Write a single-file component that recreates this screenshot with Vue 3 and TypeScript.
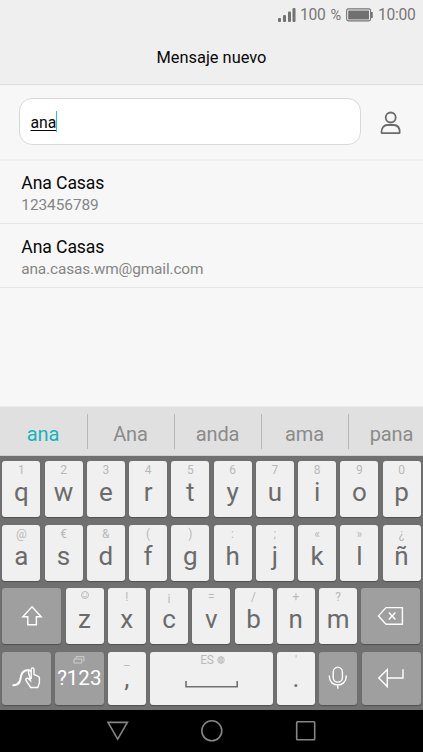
<script setup lang="ts">
interface Contact {
  name: string
  detail: string
}

interface Key {
  label: string
  hint: string
}

const contacts: Contact[] = [
  { name: 'Ana Casas', detail: '123456789' },
  { name: 'Ana Casas', detail: 'ana.casas.wm@gmail.com' },
]

const suggestions: string[] = ['ana', 'Ana', 'anda', 'ama', 'pana']

function makeRow(labels: string, hints: string): Key[] {
  const marks = [...hints]
  return [...labels].map((label, i) => ({ label, hint: marks[i] }))
}

const firstRow = makeRow('qwertyuiop', '1234567890')
const secondRow = makeRow('asdfghjklñ', '@€&():;«»¿')
const thirdRow = makeRow('zxcvbnm', '☺!¡=/+?')
</script>

<template>
  <div class="screen">
    <div class="status">
      <svg class="signal" width="18" height="15" viewBox="0 0 18 15">
        <rect x="0" y="11" width="3" height="4" rx="1" />
        <rect x="5" y="8" width="3" height="7" rx="1" />
        <rect x="10" y="4.5" width="3" height="10.5" rx="1" />
        <rect x="14.5" y="1" width="3" height="14" rx="1" />
      </svg>
      <span class="charge">100</span>
      <span class="percent">%</span>
      <svg class="battery" width="27" height="14" viewBox="0 0 27 14">
        <rect x="0.6" y="0.9" width="24" height="12" rx="1.8" class="shell" />
        <rect x="2.2" y="2.4" width="20.8" height="9" rx="0.5" class="fill" />
        <rect x="25" y="4" width="1.7" height="6" class="fill" />
      </svg>
      <span class="clock">10:00</span>
    </div>

    <header class="title"><span>Mensaje nuevo</span></header>

    <div class="recipient">
      <div class="field"><span class="typed">ana</span><i class="caret"></i></div>
      <svg class="person" width="22" height="24" viewBox="0 0 22 24">
        <circle cx="10.7" cy="6.5" r="5" />
        <path d="M2.2 22.2Q1.5 22.2 1.5 21.4C1.5 16.8 3.8 14 7.5 14H13.7C17.4 14 19.7 16.8 19.7 21.4Q19.7 22.2 19 22.2Z" />
      </svg>
    </div>

    <ul class="contacts">
      <li v-for="contact in contacts" :key="contact.detail">
        <span class="name">{{ contact.name }}</span>
        <span class="detail">{{ contact.detail }}</span>
      </li>
    </ul>

    <div class="suggestions">
      <span v-for="(word, i) in suggestions" :key="word" :class="{ active: i === 0 }">{{ word }}</span>
    </div>

    <div class="keyboard">
      <div class="row">
        <div v-for="key in firstRow" :key="key.label" class="key">
          <span class="hint">{{ key.hint }}</span>
          <span class="label">{{ key.label }}</span>
        </div>
      </div>
      <div class="row">
        <div v-for="key in secondRow" :key="key.label" class="key">
          <span class="hint">{{ key.hint }}</span>
          <span class="label">{{ key.label }}</span>
        </div>
      </div>
      <div class="row">
        <div class="key dark wide">
          <svg width="22" height="22" viewBox="0 0 22 22">
            <path d="M11 1.8L20.2 11.8H15.4V19.7H6.8V11.8H1.8Z" />
          </svg>
        </div>
        <div v-for="key in thirdRow" :key="key.label" class="key">
          <svg v-if="key.hint === '☺'" class="smiley" width="38" height="14" viewBox="0 0 38 14">
            <circle cx="19" cy="5" r="3.5" />
            <path d="M17 5.8Q19 8.6 21 5.8M17.5 3.5V4.3M20.5 3.5V4.3" />
          </svg>
          <span v-else class="hint">{{ key.hint }}</span>
          <span class="label">{{ key.label }}</span>
        </div>
        <div class="key dark wide">
          <svg width="28" height="20" viewBox="0 0 28 20">
            <path d="M9 1.6H25.4V18.2H9L1.5 9.9Z" />
            <path d="M11.8 6.4L18.4 13.4M18.4 6.4L11.8 13.4" />
          </svg>
        </div>
      </div>
      <div class="row last">
        <div class="key dark medium">
          <svg class="swipe" width="30" height="24" viewBox="0 0 30 24">
            <path class="stroke-trail" d="M1.5 19.3C6 19.3 8.5 18 9.3 13.5C10 8.5 11 4 18.5 4" />
            <path d="M20.2 13V3.5C20.2 1.3 23 1.3 23 3.5V8.5L27.3 10.3Q28.4 10.8 28.4 12V17L26.8 21.5H19.7L15 14.5C14.2 13 15.8 11.5 17.2 12.6L19.5 14.7L17.5 6.5C17 4.5 19.5 4 20.2 6" />
          </svg>
        </div>
        <div class="key dark medium symbols">
          <svg class="cards" width="12" height="8" viewBox="0 0 12 8">
            <path d="M3 2.4V0.7H11V4.7H9.4M1 3H8.8V7H1Z" />
          </svg>
          <span>?123</span>
        </div>
        <div class="key punct">
          <span class="hint">_</span>
          <span class="label">,</span>
        </div>
        <div class="key space">
          <span class="language">ES
            <svg width="8" height="8" viewBox="0 0 8 8">
              <circle cx="4" cy="4" r="3.4" />
              <path d="M4 0.6V7.4M0.6 4H7.4M1.2 2.1H6.8M1.2 5.9H6.8" />
              <ellipse cx="4" cy="4" rx="1.8" ry="3.4" />
            </svg>
          </span>
          <svg class="bar" width="54" height="7" viewBox="0 0 54 7">
            <path d="M1 0V5.7H52.2V0" />
          </svg>
        </div>
        <div class="key punct">
          <span class="hint">'</span>
          <span class="label">.</span>
        </div>
        <div class="key dark">
          <svg width="20" height="24" viewBox="0 0 20 24">
            <rect x="5.2" y="1.3" width="9.2" height="14.8" rx="4.6" />
            <path d="M1.4 9.5V10.8C1.4 21.6 18.2 21.6 18.2 10.8V9.5M9.8 19V22.7" />
          </svg>
        </div>
        <div class="key dark wide">
          <svg width="28" height="20" viewBox="0 0 28 20">
            <path d="M10.3 1.5V18.6L1.8 10Z M10.3 10H26V1.2" />
          </svg>
        </div>
      </div>
    </div>

    <nav class="navbar">
      <svg width="22" height="22" viewBox="0 0 22 22"><path d="M1 2.4H20.4L10.7 19.2Z" /></svg>
      <svg width="22" height="22" viewBox="0 0 22 22"><circle cx="10.8" cy="10.8" r="10" /></svg>
      <svg width="22" height="22" viewBox="0 0 22 22"><rect x="1.7" y="1.7" width="18" height="18" rx="0.7" /></svg>
    </nav>
  </div>
</template>

<style>
body {
  margin: 0;
  overflow: hidden;
}
</style>

<style scoped>
.screen {
  display: flex;
  flex-direction: column;
  width: 423px;
  height: 752px;
  overflow: hidden;
  background: #f7f7f7;
  color: #080808;
  font-family: Roboto, sans-serif;
}

svg {
  display: block;
  flex: none;
  fill: none;
}

.status {
  display: flex;
  align-items: center;
  justify-content: flex-end;
  box-sizing: border-box;
  height: 30px;
  padding-right: 7px;
  background: #efefef;
  color: #777;
  font-size: 15.6px;
  letter-spacing: -0.25px;
  line-height: 30px;
}

.signal {
  margin: 0 4.5px 2px 0;
  fill: #737373;
}

.charge {
  width: 24.5px;
  margin-left: -0.5px;
}

.percent {
  width: 10px;
  margin-left: 6px;
  font-size: 14.6px;
}

.battery {
  margin-left: 5px;
}

.shell {
  stroke: #757575;
  stroke-width: 1.1;
}

.fill {
  fill: #707070;
}

.clock {
  width: 38px;
  margin-left: 5.5px;
}

.title {
  box-sizing: border-box;
  height: 55px;
  border-bottom: 1px solid #dcdcdc;
  background: #efefef;
  font-size: 16.4px;
  line-height: 55px;
  text-align: center;
}

.recipient {
  display: flex;
  align-items: center;
  box-sizing: border-box;
  height: 76px;
  padding: 0 20px 2px 18.5px;
  border-bottom: 2px solid #eeeeee;
}

.field {
  display: flex;
  flex: none;
  align-items: center;
  box-sizing: border-box;
  width: 342px;
  height: 47px;
  padding-left: 11px;
  border: 1px solid #d9d9d9;
  border-radius: 13px;
  background: #fff;
  font-size: 15.8px;
}

.typed {
  padding-top: 2px;
  text-decoration: underline;
  text-decoration-thickness: 1px;
  text-underline-offset: 2px;
}

.caret {
  width: 1.5px;
  height: 21px;
  margin-left: -0.7px;
  background: #2fc4c8;
}

.person {
  margin: 3px 0 0 19.5px;
  stroke: #6b6b6b;
  stroke-width: 1.8;
}

.contacts {
  flex: 1;
  margin: 0;
  padding: 0;
  list-style: none;
}

.contacts li {
  display: flex;
  flex-direction: column;
  box-sizing: border-box;
  height: 64px;
  padding: 11px 21.3px 0;
  border-bottom: 1px solid #e6e6e6;
}

.contacts li:first-child {
  height: 63px;
  padding-top: 10px;
}

.name {
  font-size: 17.6px;
  letter-spacing: -0.1px;
  line-height: 24px;
}

.detail {
  color: #858585;
  font-size: 15.4px;
  letter-spacing: -0.15px;
  line-height: 21px;
}

.contacts li:first-child .detail {
  letter-spacing: -0.05px;
}

.suggestions {
  display: flex;
  box-sizing: border-box;
  height: 50px;
  padding: 7px 0;
  border-top: 1px solid #ececec;
  border-bottom: 1px solid #cfcfcf;
  background: #e0e0e0;
  color: #8b8b8b;
  font-size: 20px;
  letter-spacing: -0.1px;
  line-height: 40px;
  text-align: center;
}

.suggestions span {
  flex: none;
  box-sizing: border-box;
  height: 35px;
  width: 87px;
  padding-right: 1px;
  border-left: 1px solid #b7b7b7;
}

.suggestions .active {
  border-left: 0;
  color: #14b5bb;
}

.keyboard {
  display: flex;
  flex-direction: column;
  gap: 7.5px;
  box-sizing: border-box;
  height: 254px;
  padding: 5px 2px 0 2.3px;
  background: #707070;
}

.row {
  display: flex;
  gap: 4.25px;
  height: 56px;
}

.last {
  height: 53.5px;
}

.key {
  display: flex;
  flex: none;
  flex-direction: column;
  align-items: center;
  box-sizing: border-box;
  width: 38px;
  padding-top: 2px;
  border-radius: 3px;
  background: #f0f0f0;
  box-shadow: 0 1px 1px #505050;
  color: #6b6b6b;
}

.hint {
  height: 14px;
  color: #b9b9b9;
  font-size: 12px;
  line-height: 14px;
}

.label {
  font-size: 26px;
  line-height: 30px;
}

.punct .hint {
  height: 12px;
}

.punct .label {
  line-height: 24px;
}

.dark {
  justify-content: center;
  padding: 0;
  background: #9f9f9f;
  color: #fff;
  stroke: #fff;
  stroke-width: 1.4;
}

.wide {
  width: 59px;
}

.medium {
  width: 48.5px;
}

.swipe {
  margin-right: 2px;
}

.stroke-trail {
  stroke-width: 2;
}

.smiley {
  stroke: #b4b4b4;
  stroke-width: 0.9;
}

.symbols {
  justify-content: flex-start;
  padding-top: 4px;
  font-size: 20.5px;
  line-height: 24px;
  stroke: none;
}

.symbols span {
  margin-top: 2px;
}

.cards {
  stroke: #d2d2d2;
  stroke-width: 0.9;
}

.space {
  width: 122.75px;
  padding-top: 1px;
}

.language {
  display: flex;
  align-items: center;
  gap: 3px;
  padding-left: 2px;
  color: #b9b9b9;
  font-size: 12px;
  letter-spacing: -0.2px;
  line-height: 15px;
}

.language svg {
  stroke: #b0b0b0;
  stroke-width: 0.55;
}

.bar {
  margin: 13.5px 0 0 1px;
  stroke: #707070;
  stroke-width: 1.6;
}

.navbar {
  display: flex;
  gap: 72px;
  box-sizing: border-box;
  height: 42px;
  padding: 10px 0 0 106.5px;
  background: #000;
  stroke: #858585;
  stroke-width: 1.6;
}
</style>
